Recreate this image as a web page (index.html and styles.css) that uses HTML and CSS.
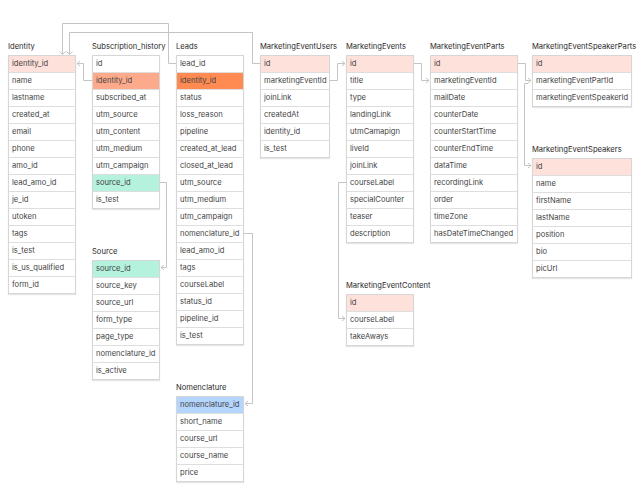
FILE: index.html
```html
<!DOCTYPE html>
<html>
<head>
<meta charset="utf-8">
<link rel="stylesheet" href="styles.css">
</head>
<body>
<div class="canvas">
  <div class="col w68">
    <div class="block">
      <div class="title">Identity</div>
      <div class="table">
        <div class="row pk">identity_id</div>
        <div class="row">name</div>
        <div class="row">lastname</div>
        <div class="row">created_at</div>
        <div class="row">email</div>
        <div class="row">phone</div>
        <div class="row">amo_id</div>
        <div class="row">lead_amo_id</div>
        <div class="row">je_id</div>
        <div class="row">utoken</div>
        <div class="row">tags</div>
        <div class="row">is_test</div>
        <div class="row">is_us_qualified</div>
        <div class="row">form_id</div>
      </div>
    </div>
  </div>
  <div class="col w68">
    <div class="block">
      <div class="title">Subscription_history</div>
      <div class="table">
        <div class="row">id</div>
        <div class="row salmon">identity_id</div>
        <div class="row">subscribed_at</div>
        <div class="row">utm_source</div>
        <div class="row">utm_content</div>
        <div class="row">utm_medium</div>
        <div class="row">utm_campaign</div>
        <div class="row green">source_id</div>
        <div class="row">is_test</div>
      </div>
    </div>
    <div class="block">
      <div class="title">Source</div>
      <div class="table">
        <div class="row green">source_id</div>
        <div class="row">source_key</div>
        <div class="row">source_url</div>
        <div class="row">form_type</div>
        <div class="row">page_type</div>
        <div class="row">nomenclature_id</div>
        <div class="row">is_active</div>
      </div>
    </div>
  </div>
  <div class="col w68">
    <div class="block">
      <div class="title">Leads</div>
      <div class="table">
        <div class="row">lead_id</div>
        <div class="row orange">identity_id</div>
        <div class="row">status</div>
        <div class="row">loss_reason</div>
        <div class="row">pipeline</div>
        <div class="row">created_at_lead</div>
        <div class="row">closed_at_lead</div>
        <div class="row">utm_source</div>
        <div class="row">utm_medium</div>
        <div class="row">utm_campaign</div>
        <div class="row">nomenclature_id</div>
        <div class="row">lead_amo_id</div>
        <div class="row">tags</div>
        <div class="row">courseLabel</div>
        <div class="row">status_id</div>
        <div class="row">pipeline_id</div>
        <div class="row">is_test</div>
      </div>
    </div>
    <div class="block">
      <div class="title">Nomenclature</div>
      <div class="table">
        <div class="row blue">nomenclature_id</div>
        <div class="row">short_name</div>
        <div class="row">course_url</div>
        <div class="row">course_name</div>
        <div class="row">price</div>
      </div>
    </div>
  </div>
  <div class="col w70">
    <div class="block">
      <div class="title">MarketingEventUsers</div>
      <div class="table">
        <div class="row pk">id</div>
        <div class="row">marketingEventId</div>
        <div class="row">joinLink</div>
        <div class="row">createdAt</div>
        <div class="row">identity_id</div>
        <div class="row">is_test</div>
      </div>
    </div>
  </div>
  <div class="col w68">
    <div class="block">
      <div class="title">MarketingEvents</div>
      <div class="table">
        <div class="row pk">id</div>
        <div class="row">title</div>
        <div class="row">type</div>
        <div class="row">landingLink</div>
        <div class="row">utmCamapign</div>
        <div class="row">liveId</div>
        <div class="row">joinLink</div>
        <div class="row">courseLabel</div>
        <div class="row">specialCounter</div>
        <div class="row">teaser</div>
        <div class="row">description</div>
      </div>
    </div>
    <div class="block">
      <div class="title">MarketingEventContent</div>
      <div class="table">
        <div class="row pk">id</div>
        <div class="row">courseLabel</div>
        <div class="row">takeAways</div>
      </div>
    </div>
  </div>
  <div class="col w88">
    <div class="block">
      <div class="title">MarketingEventParts</div>
      <div class="table">
        <div class="row pk">id</div>
        <div class="row">marketingEventId</div>
        <div class="row">mailDate</div>
        <div class="row">counterDate</div>
        <div class="row">counterStartTime</div>
        <div class="row">counterEndTime</div>
        <div class="row">dataTime</div>
        <div class="row">recordingLink</div>
        <div class="row">order</div>
        <div class="row">timeZone</div>
        <div class="row">hasDateTimeChanged</div>
      </div>
    </div>
  </div>
  <div class="col w100 last">
    <div class="block">
      <div class="title">MarketingEventSpeakerParts</div>
      <div class="table">
        <div class="row pk">id</div>
        <div class="row">marketingEventPartId</div>
        <div class="row">marketingEventSpeakerId</div>
      </div>
    </div>
    <div class="block">
      <div class="title">MarketingEventSpeakers</div>
      <div class="table">
        <div class="row pk">id</div>
        <div class="row">name</div>
        <div class="row">firstName</div>
        <div class="row">lastName</div>
        <div class="row">position</div>
        <div class="row">bio</div>
        <div class="row">picUrl</div>
      </div>
    </div>
  </div>

  <svg class="links" width="640" height="504" viewBox="0 0 640 504" fill="none" stroke="#c4c4c4" stroke-width="1">
    <path d="M176 63.5H168.5V23.5H62.5V54"/>
    <path d="M59.5 51.5l3 3 3-3"/>
    <path d="M260 63.5H252.5V32.5H69.5V54"/>
    <path d="M66.5 51.5l3 3 3-3"/>
    <path d="M92 80.5H83.5V63.5H77"/>
    <path d="M80 61l-3 2.5 3 2.5"/>
    <path d="M160 182.5H166.5V267.5H161"/>
    <path d="M164 265l-3 2.5 3 2.5"/>
    <path d="M244 233.5H252.5V403.5H245"/>
    <path d="M248 401l-3 2.5 3 2.5"/>
    <path d="M330 80.5H337.5V63.5H345"/>
    <path d="M342 61l3 2.5-3 2.5"/>
    <path d="M414 63.5H421.5V80.5H429"/>
    <path d="M426 78l3 2.5-3 2.5"/>
    <path d="M518 63.5H525.5V80.5H531"/>
    <path d="M528 78l3 2.5-3 2.5"/>
    <path d="M528 83.5H524.5V165.5H531"/>
    <path d="M528 163l3 2.5-3 2.5"/>
    <path d="M346 182.5H338.5V318.5H345"/>
    <path d="M342 316l3 2.5-3 2.5"/>
  </svg>
</div>
</body>
</html>
```

FILE: styles.css
```css
html, body {
  margin: 0;
  padding: 0;
  background: #ffffff;
}

.canvas {
  position: relative;
  width: 640px;
  height: 504px;
  box-sizing: border-box;
  padding: 39px 0 0 8px;
  display: flex;
  align-items: flex-start;
  gap: 16px;
  font-family: Inter, "Noto Sans", sans-serif;
  font-size: 7.6px;
  color: #444444;
}

.col {
  display: flex;
  flex-direction: column;
  gap: 35px;
  flex: none;
}

.w68 { width: 68px; }
.w70 { width: 70px; }
.w88 { width: 88px; }
.w100 { width: 100px; }
.last { margin-left: -2px; }

.title {
  height: 16px;
  line-height: 15px;
  color: #2a2a2a;
  white-space: nowrap;
}

.table {
  border: 1px solid #d6d6d6;
  box-shadow: 0 1px 1px rgba(0, 0, 0, 0.10);
  background: #ffffff;
}

.row {
  box-sizing: border-box;
  height: 17px;
  line-height: 16px;
  padding-left: 3px;
  white-space: nowrap;
  border-top: 1px solid #dedede;
}

.row:first-child {
  height: 16px;
  border-top: none;
}

.pk { background: #fde1da; }
.salmon { background: #fcaa8b; }
.orange { background: #ff8a52; }
.green { background: #b5f2dd; }
.blue { background: #b4d5fd; }

.links {
  position: absolute;
  top: 0;
  left: 0;
  pointer-events: none;
}
```
